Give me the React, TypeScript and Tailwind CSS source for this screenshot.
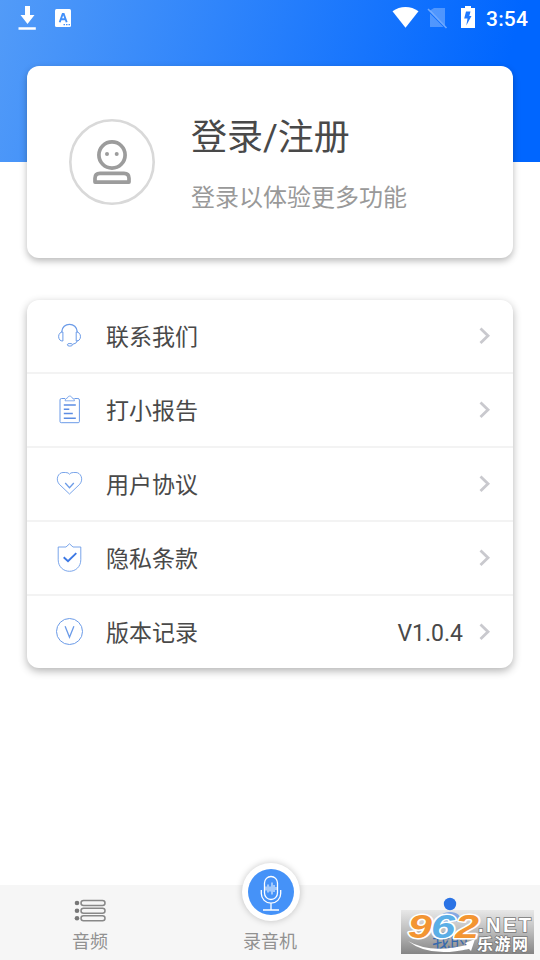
import type { ReactNode } from 'react'

const BLUE = '#6b9be8'

function StatusBar() {
  return (
    <div className="flex h-9 items-center justify-between text-white">
      <svg width="80" height="36" viewBox="0 0 80 36" fill="currentColor">
        <path d="M25 6h5v9h4.500L27.500 24 20.500 15H25zM18.500 27.300h17.300v2.500H18.500z" />
        <path d="M56.500 9h13a1.500 1.500 0 0 1 1.500 1.500v15a1.500 1.500 0 0 1-1.500 1.500h-13a1.500 1.500 0 0 1-1.500-1.500v-15A1.500 1.500 0 0 1 56.500 9z" />
        <path d="M59.700 22.300l3-8.300h1l3 8.300M60.700 19.300h5" stroke="#4290fa" strokeWidth="1.900" fill="none" />
        <path d="M63.500 24.700h1.500M66 24.700h1.500M68.500 24.700h1.500" stroke="#4290fa" strokeWidth="1.300" />
      </svg>
      <div className="flex items-center">
        <svg width="96" height="36" viewBox="390 0 96 36" fill="currentColor">
          <path d="M392.500 11.200C400 5.500 411 5.500 418.500 11.200L405.500 27.700z" />
          <path d="M434 8h11v17.500L430 10.500zM430 13.500L443.500 27H430z" opacity=".28" />
          <path d="M428 9l18.500 19" stroke="white" strokeWidth="1.600" opacity=".4" />
          <path d="M465 6h6v2h4v20h-14V8h4z" />
          <path d="M466 11.500h4.500l-1.200 4.500h2.200l-5.200 9.500 1.200-7h-3.300z" fill="#1f78ff" />
        </svg>
        <span className="mt-[2px] mr-3 w-[42px] text-[21px] leading-6 font-medium tracking-[0.2px]">3:54</span>
      </div>
    </div>
  )
}

function Avatar() {
  return (
    <svg width="86" height="86" viewBox="69 119 86 86" fill="none">
      <circle cx="112" cy="162" r="41.700" stroke="#d9d9d9" strokeWidth="2.600" />
      <g stroke="#9c9c9c" strokeWidth="3.700">
        <circle cx="112" cy="155" r="13.100" />
        <path d="M100 173.300h24q5 0 5 5v3.800H95v-3.800q0-5 5-5z" strokeLinejoin="round" />
      </g>
      <circle cx="107" cy="154" r="2" fill="#9c9c9c" />
      <circle cx="116.700" cy="154" r="2" fill="#9c9c9c" />
    </svg>
  )
}

function Chevron() {
  return (
    <svg width="12" height="18" viewBox="0 0 12 18" fill="none" stroke="#c9c9ce" strokeWidth="2.800">
      <path d="M1.500 1.500L9 8.700l-7.500 7.200" />
    </svg>
  )
}

function IconBox({ children }: { children: ReactNode }) {
  return (
    <svg width="30" height="32" viewBox="0.5 0 30 32" fill="none" stroke={BLUE} strokeWidth="1">
      {children}
    </svg>
  )
}

const items = [
  {
    label: '联系我们',
    icon: (
      <>
        <path d="M7.200 12C7.500 1.700 22.500 1.700 22.800 12" strokeWidth="1.300" />
        <path d="M8.400 12v9C2.700 21.500 2.700 11.800 8.400 12zM21.700 12v9c5.700.5 5.700-9.200 0-9zM23 20.500q-1 3.500-5 3.800" />
        <ellipse cx="15.400" cy="24.800" rx="2.600" ry="1.300" />
      </>
    ),
  },
  {
    label: '打小报告',
    icon: (
      <>
        <path d="M10.500 4.500H7q-1.500 0-1.500 1.500v21.500q0 1.200 1.200 1.200h17q1.200 0 1.200-1.200V6q0-1.500-1.500-1.500h-3.500" />
        <path d="M10.500 6.800q0-2.500 2.500-2.800c.3-2.600 4.200-2.600 4.500 0q2.500.3 2.500 2.800z" strokeWidth=".8" />
        <path d="M9.300 11h12M9.300 15.300h5.500M9.300 19.500h9M9.300 24.300h12" strokeWidth="1.400" stroke="#5c8de3" />
      </>
    ),
  },
  {
    label: '用户协议',
    icon: (
      <>
        <path d="M15 26L4.700 16.200C.5 11 4 4.500 8.500 4.500h2.700Q14 4.500 15 6.200q1-1.700 3.800-1.700h2.700c4.500 0 8 6.500 3.800 11.700z" strokeWidth=".9" />
        <path d="M10.700 15L15 19.700l4.300-4.700" strokeWidth="1.300" />
      </>
    ),
  },
  {
    label: '隐私条款',
    icon: (
      <>
        <path d="M3.700 5h7.800L15 1.800 18.500 5h7.800v12.800c0 7-5.300 11.500-11.300 11.500S3.700 24.800 3.700 17.800z" strokeWidth=".9" />
        <path d="M9.200 15.300l4.300 4 8.300-8.200" stroke="#3c78e4" strokeWidth="1.900" />
      </>
    ),
  },
  {
    label: '版本记录',
    value: 'V1.0.4',
    icon: (
      <>
        <circle cx="15" cy="15.500" r="13" />
        <path d="M10.600 10.200L15 21.300l4.400-11.100" strokeWidth="1.300" />
      </>
    ),
  },
]

function Menu() {
  return (
    <section className="mx-[27px] mt-[42px] divide-y-2 divide-[#f3f3f3] rounded-xl bg-white shadow-[0_3px_8px_rgba(0,0,0,0.3)]">
      {items.map(item => (
        <div key={item.label} className="flex h-[74px] items-center pr-[22px] pl-7 last:h-[72px]">
          <IconBox>{item.icon}</IconBox>
          <span className="mt-1 ml-[21px] text-[23px] leading-8 text-[#494949]">{item.label}</span>
          <div className="ml-auto flex items-center gap-4">
            {item.value && <span className="mt-1 text-[23px] leading-8 text-[#494949]">{item.value}</span>}
            <Chevron />
          </div>
        </div>
      ))}
    </section>
  )
}

function Watermark() {
  return (
    <svg className="absolute top-[25px] left-[401px] z-20" width="133" height="44" viewBox="401 910 133 44">
      <g fontFamily="Liberation Sans, sans-serif" fontWeight="700" paintOrder="stroke">
        <g fontSize="34" fontStyle="italic" strokeWidth="3" strokeLinejoin="round" stroke="white">
          <text x="408" y="938" textLength="24" lengthAdjust="spacingAndGlyphs" fill="#f39532">9</text>
          <text x="431" y="938" textLength="24" lengthAdjust="spacingAndGlyphs" fill="#5baee6">6</text>
          <text x="455" y="938" textLength="24" lengthAdjust="spacingAndGlyphs" fill="#f39532">2</text>
        </g>
        <text x="478" y="932" fontSize="20" textLength="53" fill="white" stroke="#777777" strokeWidth="1.500">.NET</text>
      </g>
      <text x="477" y="950" fontSize="16" fontWeight="700" textLength="51" fill="white" stroke="#777777" strokeWidth="1.500" paintOrder="stroke" fontFamily="Noto Sans CJK SC, sans-serif">乐游网</text>
      <path d="M408 941q22 13 59 4l-2-2 10-4-4 12-2-2q-40 9-61-8z" fill="white" />
    </svg>
  )
}

function BottomNav() {
  return (
    <nav className="relative mt-auto grid h-[75px] grid-cols-3 bg-[#f6f6f6] text-center text-lg leading-6 text-[#919191]">
      <div className="flex flex-col items-center">
        <svg className="mt-[14px]" width="34" height="24" viewBox="0 0 34 24" fill="none" stroke="#888888">
          {[4, 11.7, 19.2].map(y => (
            <g key={y}>
              <circle cx="4" cy={y} r="2.300" fill="#777777" stroke="none" />
              <rect x="8" y={y - 2.5} width="24" height="5" rx="2.500" strokeWidth="1.500" />
            </g>
          ))}
        </svg>
        <span className="mt-[7px]">音频</span>
      </div>
      <div className="flex flex-col items-center">
        <div className="-mt-[22px] ml-px flex size-[58px] items-center justify-center rounded-full bg-white shadow-[0_0_7px_rgba(0,0,0,0.22)]">
          <svg width="46" height="46" viewBox="0 0 46 46" fill="none" stroke="white" strokeWidth="1.300">
            <circle cx="23" cy="23" r="23" fill="#4592f8" stroke="none" />
            <rect x="16.500" y="7.500" width="13" height="23" rx="6.500" />
            <path d="M13.300 21v3.500a9.700 9.700 0 0 0 19.400 0V21M23 34.200v6.500M15 41h16" />
            <path d="M18 17.500v4M20 15.500v8M22 17.500v5M24 13.500v12M26 16v7M28 18v3" strokeWidth="1" />
          </svg>
        </div>
        <span className="mt-[9px]">录音机</span>
      </div>
      <div className="absolute top-[25px] left-[401px] h-11 w-[133px] bg-linear-to-b from-[#e8e8e8] via-[#bbbbbb] to-[#858585]" />
      <div className="z-10 flex flex-col items-center text-[#3569ad]">
        <svg className="mt-3" width="34" height="26" viewBox="0 0 34 26" fill="#2b73e5">
          <circle cx="17" cy="7" r="6.200" />
          <path d="M6 25q0-10 11-10t11 10z" opacity=".5" />
        </svg>
        <span className="mt-[7px]">我的</span>
      </div>
      <Watermark />
    </nav>
  )
}

export default function App() {
  return (
    <main className="flex h-[960px] w-[540px] flex-col overflow-hidden bg-white font-[Roboto,'Noto_Sans_CJK_SC',sans-serif]">
      <header className="h-[162px] shrink-0 bg-[linear-gradient(105deg,#529bf8_0%,#0066ff_90%)]">
        <StatusBar />
        <section className="mx-[27px] mt-[30px] flex h-48 items-center rounded-xl bg-white pl-[42px] shadow-[0_3px_7px_rgba(0,0,0,0.28)]">
          <Avatar />
          <div className="mt-[3px] ml-9">
            <h1 className="text-[36px] leading-[52px] text-[#494949]">登录/注册</h1>
            <p className="mt-4 text-2xl leading-9 text-[#999999]">登录以体验更多功能</p>
          </div>
        </section>
      </header>
      <div className="mt-24">
        <Menu />
      </div>
      <BottomNav />
    </main>
  )
}
